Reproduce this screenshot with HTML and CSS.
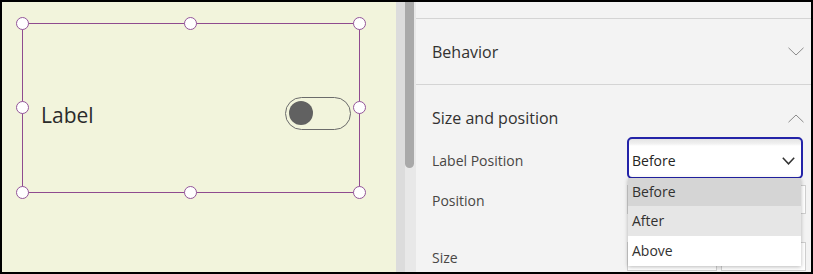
FILE: index.html
```html
<!DOCTYPE html>
<html>
<head>
<meta charset="utf-8">
<link rel="stylesheet" href="styles.css">
</head>
<body>
<div class="frame">
  <div class="canvas">
    <div class="ctrl">
      <span class="ctrl-label">Label</span>
      <span class="toggle"><span class="knob"></span></span>
      <span class="h h-tl"></span><span class="h h-tm"></span><span class="h h-tr"></span>
      <span class="h h-ml"></span><span class="h h-mr"></span>
      <span class="h h-bl"></span><span class="h h-bm"></span><span class="h h-br"></span>
    </div>
  </div>
  <div class="scroll">
    <div class="track-l"></div>
    <div class="track-r"><div class="thumb"></div></div>
  </div>
  <div class="panel">
    <div class="top-strip"></div>
    <div class="sec sec-behavior">
      <span class="sec-title">Behavior</span>
      <svg class="chev" width="16" height="9" viewBox="0 0 16 9"><path d="M0.5 0.8 L8 8 L15.5 0.8" fill="none" stroke="#8a8a8a" stroke-width="1"/></svg>
    </div>
    <div class="sec sec-size">
      <span class="sec-title">Size and position</span>
      <svg class="chev" width="16" height="9" viewBox="0 0 16 9"><path d="M0.5 8.2 L8 1 L15.5 8.2" fill="none" stroke="#8a8a8a" stroke-width="1"/></svg>
    </div>
    <div class="row row-lp">
      <span class="row-label">Label Position</span>
      <div class="dd">
        <span>Before</span>
        <svg width="13" height="8" viewBox="0 0 13 8"><path d="M0.8 0.8 L6.5 6.8 L12.2 0.8" fill="none" stroke="#333" stroke-width="1.5"/></svg>
      </div>
      <div class="dd-list">
        <div class="opt opt-sel">Before</div>
        <div class="opt opt-hov">After</div>
        <div class="opt">Above</div>
      </div>
    </div>
    <div class="row row-pos">
      <span class="row-label">Position</span>
      <div class="inputs"><span class="inp inp-x"></span><span class="inp inp-y"></span></div>
    </div>
    <div class="row row-size">
      <span class="row-label">Size</span>
      <div class="inputs"><span class="inp inp-x"></span><span class="inp inp-y"></span></div>
    </div>
  </div>
</div>
</body>
</html>
```
FILE: styles.css
```css
* { box-sizing: border-box; }
html, body { margin: 0; padding: 0; background: #000; }
body { font-family: "Open Sans", "Noto Sans", sans-serif; color: #323130; }

.frame {
  width: 813px;
  height: 274px;
  border: 2px solid #000;
  display: flex;
  overflow: hidden;
  background: #000;
}

.canvas {
  width: 394px;
  flex: none;
  background: #f2f4dc;
  position: relative;
}

.ctrl {
  position: absolute;
  left: 20px;
  top: 21px;
  width: 338px;
  height: 170px;
  border: 1px solid #8f4b8f;
  display: flex;
  align-items: center;
  justify-content: space-between;
  padding: 14px 8px 0 18px;
}
.ctrl-label {
  font-size: 21px;
  line-height: 28px;
  color: #2b2b2b;
}
.toggle {
  width: 66px;
  height: 33px;
  border: 1.5px solid #6b6b6b;
  border-radius: 17px;
  display: flex;
  align-items: center;
  padding-left: 2.5px;
  margin-top: -4px;
}
.knob {
  width: 24px;
  height: 24px;
  border-radius: 50%;
  background: #616161;
}

.h {
  position: absolute;
  width: 13px;
  height: 13px;
  border-radius: 50%;
  background: #fff;
  border: 1.5px solid #94559a;
}
.h-tl { left: -7px; top: -7px; }
.h-tm { left: 161px; top: -7px; }
.h-tr { right: -7px; top: -7px; }
.h-ml { left: -7px; top: 77px; }
.h-mr { right: -7px; top: 77px; }
.h-bl { left: -7px; bottom: -7px; }
.h-bm { left: 161px; bottom: -7px; }
.h-br { right: -7px; bottom: -7px; }

.scroll {
  width: 20px;
  flex: none;
  display: flex;
}
.track-l { width: 9px; background: #dcdcdc; }
.track-r { width: 11px; background: #e8e8e8; padding-right: 2px; }
.thumb {
  width: 9px;
  height: 166px;
  background: #a9a9a9;
  border-radius: 0 0 5px 5px;
}

.panel {
  flex: 1;
  background: #f3f3f3;
  position: relative;
}
.top-strip {
  height: 17px;
  border-bottom: 1px solid #d4d4d4;
}
.sec {
  display: flex;
  align-items: center;
  justify-content: space-between;
  padding: 0 7px 0 16px;
}
.sec-behavior {
  height: 66px;
  border-bottom: 1px solid #d4d4d4;
}
.sec-size {
  height: 52px;
  padding-top: 14px;
}
.sec-title {
  font-size: 16px;
  line-height: 22px;
  color: #323130;
}
.sec-size .sec-title { margin-top: -1px; }

.row {
  display: flex;
  align-items: flex-start;
  padding-left: 16px;
  position: relative;
}
.row-label {
  width: 195px;
  flex: none;
  font-size: 14px;
  line-height: 20px;
  color: #484644;
}
.row-lp { height: 41px; }
.row-lp .row-label { margin-top: 14px; }

.dd {
  width: 176px;
  height: 42px;
  border: 2px solid #2323a8;
  border-radius: 5px;
  background: linear-gradient(#e4e4e4, #f2f2f2 5px, #fff 7px);
  display: flex;
  align-items: center;
  justify-content: space-between;
  padding: 4px 6px 0 3px;
  font-size: 14px;
  color: #252423;
}
.dd svg { margin-top: 1px; }

.dd-list {
  position: absolute;
  left: 212px;
  top: 41px;
  width: 173px;
  background: #fff;
  box-shadow: 0 1px 4px rgba(0,0,0,0.28);
  z-index: 2;
}
.opt {
  height: 30px;
  line-height: 30px;
  padding-left: 4px;
  font-size: 14px;
  color: #323130;
}
.opt-sel { background: #d5d5d5; height: 28px; line-height: 28px; }
.opt-hov { background: #e6e6e6; }

.row-pos { height: 57px; }
.row-pos .row-label { margin-top: 13px; }
.row-size .row-label { margin-top: 13px; }

.inputs {
  display: flex;
  gap: 4px;
  padding-top: 7px;
}
.inp {
  height: 29px;
  background: #fff;
  border: 1px solid #cfcfcf;
}
.inp-x { width: 90px; }
.inp-y { width: 85px; }
```
